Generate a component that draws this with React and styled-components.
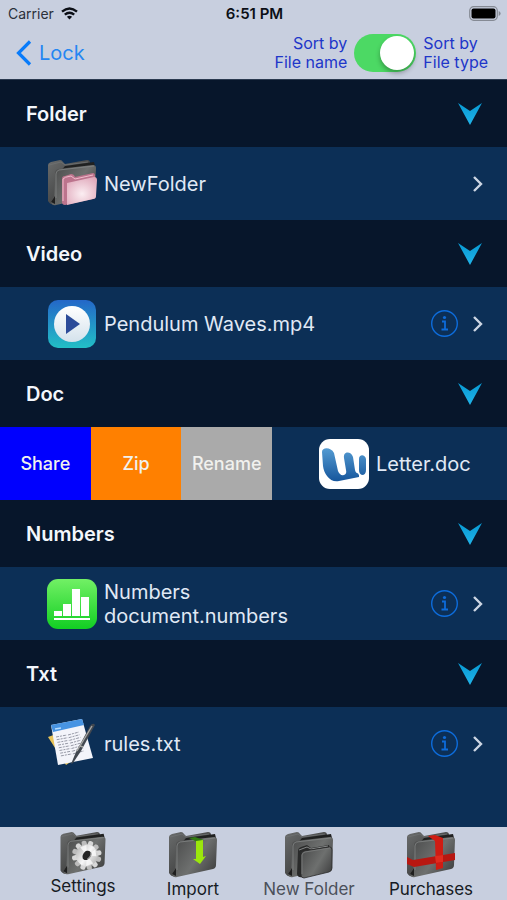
import React, { useState } from "react"
import styled, { createGlobalStyle } from "styled-components"

const sections = [
  { title: "Folder", file: "NewFolder", icon: "folder" },
  { title: "Video", file: "Pendulum Waves.mp4", icon: "video", info: true },
  { title: "Doc", file: "Letter.doc", icon: "doc", swiped: true },
  { title: "Numbers", file: "Numbers document.numbers", icon: "numbers", info: true },
  { title: "Txt", file: "rules.txt", icon: "txt", info: true },
]

const actions = [
  { name: "Share", color: "#0000fe" },
  { name: "Zip", color: "#ff8000" },
  { name: "Rename", color: "#aaaaaa" },
]

const tools = [
  { name: "Settings", icon: "settings", small: true },
  { name: "Import", icon: "import" },
  { name: "New Folder", icon: "stack", dim: true },
  { name: "Purchases", icon: "gift" },
]

const Gradients = () => (
  <defs>
    <linearGradient id="back" x1="0" y1="0" x2="1" y2="1">
      <stop offset="0" stopColor="#6a6c6c" />
      <stop offset="0.5" stopColor="#4a4b4b" />
      <stop offset="1" stopColor="#171717" />
    </linearGradient>
    <linearGradient id="front" x1="0" y1="0.2" x2="1" y2="0.8">
      <stop offset="0" stopColor="#4c4d4d" />
      <stop offset="0.55" stopColor="#6e706f" />
      <stop offset="1" stopColor="#404141" />
    </linearGradient>
    <radialGradient id="pink" cx="0.5" cy="0.6" r="0.7">
      <stop offset="0" stopColor="#fbeef2" />
      <stop offset="1" stopColor="#dfa6b9" />
    </radialGradient>
    <linearGradient id="video" x1="0" y1="0" x2="0" y2="1">
      <stop offset="0" stopColor="#2467c8" />
      <stop offset="1" stopColor="#22bfc6" />
    </linearGradient>
    <linearGradient id="disc" x1="0" y1="0" x2="0" y2="1">
      <stop offset="0" stopColor="#ffffff" />
      <stop offset="1" stopColor="#d4e2ec" />
    </linearGradient>
    <linearGradient id="word" x1="0" y1="0" x2="0" y2="1">
      <stop offset="0" stopColor="#549bd2" />
      <stop offset="1" stopColor="#16569c" />
    </linearGradient>
    <linearGradient id="green" x1="0" y1="0" x2="0" y2="1">
      <stop offset="0" stopColor="#72f065" />
      <stop offset="1" stopColor="#12cf23" />
    </linearGradient>
    <linearGradient id="arrow" x1="0" y1="0" x2="0" y2="1">
      <stop offset="0" stopColor="#079ad5" />
      <stop offset="1" stopColor="#22b4e8" />
    </linearGradient>
    <linearGradient id="gear" x1="0" y1="0" x2="1" y2="1">
      <stop offset="0" stopColor="#a9a9a9" />
      <stop offset="0.5" stopColor="#f7f7f7" />
      <stop offset="1" stopColor="#a5a5a5" />
    </linearGradient>
  </defs>
)

const FolderBack = () => (
  <>
    <path
      d="M1 6Q1 4 4 3L13 1Q15 1 16 3L18 5L40 1Q43 1 43 4L43 11L12 16L9 45Q4 47 1 42Z"
      fill="url(#back)"
    />
    <path d="M2 6L14 3L18 6L41 3" fill="none" stroke="#707273" strokeWidth="0.8" />
    <path d="M18 7L47 3L48 7L12 14Z" fill="#202121" />
  </>
)

const FolderFront = () => (
  <>
    <path
      d="M8 14Q8 11 11 10L46 6Q49 6 49 9L48 34Q48 37 45 38L9 46Q5 47 4 43L7 38Z"
      fill="url(#front)"
    />
    <path
      d="M9 39L9 15Q9 12 12 11L47 7"
      fill="none"
      stroke="#838585"
      strokeWidth="0.8"
    />
    <path d="M4 43L8 37L8 45Z" fill="#1e1e1e" />
  </>
)

const Gear = () => (
  <g transform="translate(29 26) rotate(-12)">
    {Array.from({ length: 12 }, (_, i) => (
      <path
        key={i}
        d="M-3 -10L-2.5 -15Q0 -17 2.5 -15L3 -10Z"
        fill={i % 2 ? "#d8d8d8" : "#bcbcbc"}
        transform={`rotate(${i * 30})`}
      />
    ))}
    <circle r="11.5" fill="url(#gear)" />
    <path d="M0 0L-5 -10L2 -11ZM0 0L10 -4L10 3ZM0 0L5 10L-3 11Z" fill="#fff" opacity="0.7" />
    <ellipse rx="5.5" ry="4" fill="#242424" transform="rotate(-42)" />
    <path d="M0 4Q5 2 5 -2" fill="none" stroke="#999" strokeWidth="1.4" />
  </g>
)

const icons = {
  folder: (
    <>
      <FolderBack />
      <FolderFront />
      <path
        d="M15 20Q15 17 18 17L24 15Q27 15 28 18L46 14Q48 14 48 17L49 36Q49 39 46 40L18 46Q15 46 15 43Z"
        fill="#bc748d"
      />
      <path d="M20 24L47 18Q50 18 50 21L49 37Q49 40 46 40L20 46Z" fill="url(#pink)" />
      <path d="M16 42V20Q17 18 24 17L28 20L46 16" fill="none" stroke="#f0bccb" />
    </>
  ),
  video: (
    <>
      <rect x="1" y="1" width="48" height="48" rx="10" fill="url(#video)" />
      <circle cx="25" cy="25" r="18" fill="url(#disc)" />
      <path d="M19 15L33 25L19 35Z" fill="#2b4b99" />
    </>
  ),
  doc: (
    <>
      <rect width="50" height="50" rx="11" fill="#fff" />
      <path
        d="M3 13C3 8 12 8 15 14L19 32Q21 37 25 36Q28 35 27 31L25 19C24 12 32 12 34 18L36 31Q37 35 40 34L40 38L20 42C11 44 5 35 4 27ZM40 20C40 15 46 15 47 20V31Q47 36 43 36Q40 35 40 31Z"
        fill="url(#word)"
      />
      <path d="M39 34L42 38" stroke="#fff" />
    </>
  ),
  numbers: (
    <>
      <rect width="50" height="50" rx="11" fill="url(#green)" />
      <path
        d="M7 32H15V37H7ZM16 25H24V37H16ZM25 10H33V37H25ZM34 18H42V37H34ZM7 39H43V41H7Z"
        fill="#fff"
      />
    </>
  ),
  txt: (
    <>
      <path d="M1 18L12 14L25 42L19 46Z" fill="#e8c459" />
      <path d="M4 6L35 0L46 39L11 46Z" fill="#f3f4fa" />
      <path d="M4 6L35 0L37 6L6 13Z" fill="#4794e3" />
      <path d="M8 10L14 9" stroke="#b6ddff" strokeWidth="1.5" />
      {[0, 1, 2, 3, 4, 5, 6, 7].map((n) => (
        <path
          key={n}
          d={`M${9 + n * 0.7} ${18 + n * 2.7}l11 -2m1 0l11 -3`}
          stroke="#8b8f9c"
          strokeWidth="0.9"
          strokeDasharray="3 1 2 1"
        />
      ))}
      <path d="M24 45L29 33L43 7Q46 3 48 6L34 32L26 44Z" fill="#424850" />
      <path d="M30 32L45 7M33 27L36 28" stroke="#a7a7a4" strokeWidth="1.4" />
    </>
  ),
  settings: (
    <>
      <FolderBack />
      <FolderFront />
      <Gear />
    </>
  ),
  import: (
    <>
      <FolderBack />
      <FolderFront />
      <path d="M21 7L27 6L36 9L29 11Z" fill="#327b13" />
      <path d="M28 10L35 9V26L38 25L32 33L25 28L28 28Z" fill="#9be70c" />
    </>
  ),
  stack: (
    <>
      <FolderBack />
      <FolderFront />
      <path
        d="M14 20Q14 17 17 16L23 14L27 17L45 14L46 18L18 22L18 46Q14 47 13 43Z"
        fill="#292a2a"
      />
      <path d="M15 19L23 16L27 18L44 15" fill="none" stroke="#858787" />
      <path
        d="M17 24Q17 21 20 20L46 16Q48 16 48 19L48 37Q48 40 45 41L20 47Q17 47 17 44Z"
        fill="url(#front)"
        stroke="#292a2a"
        strokeWidth="0.8"
      />
      <path d="M18 43V24Q18 22 21 21L46 17" fill="none" stroke="#777979" />
    </>
  ),
  gift: (
    <>
      <FolderBack />
      <FolderFront />
      <path d="M22 5L29 4L37 7L37 37L30 39L29 10Z" fill="#cf1c13" />
      <path d="M1 26L7 29L49 22V29L8 36L1 33Z" fill="#b81711" />
      <path d="M29 25L37 24V31L30 32Z" fill="#e12b1e" />
    </>
  ),
}

const Section = ({ title, file, icon, info, swiped }) => {
  const [open, setOpen] = useState(true)

  return (
    <section>
      <SectionTitle>
        <SectionButton aria-expanded={open} onClick={() => setOpen(!open)}>
          {title}
          <svg width="26" height="24" viewBox="0 0 26 24" aria-hidden="true">
            <path d="M1 1L13 9L25 1L13 23Z" fill="url(#arrow)" />
          </svg>
        </SectionButton>
      </SectionTitle>
      {open && (
        <Row>
          {swiped && (
            <Actions>
              {actions.map((a) => (
                <Action key={a.name} $color={a.color}>
                  {a.name}
                </Action>
              ))}
            </Actions>
          )}
          <File href="#">
            <FileIcon viewBox="0 0 50 50" aria-hidden="true">
              {icons[icon]}
            </FileIcon>
            <FileName>{file}</FileName>
          </File>
          {info && (
            <Info aria-label={`About ${file}`}>
              <svg width="27" height="27" viewBox="0 0 27 27" fill="none" stroke="#0d6cdb">
                <circle cx="13.5" cy="13.5" r="12.8" strokeWidth="1.4" />
                <path d="M11 11.5H14V19M10.5 19.5H17" strokeWidth="1.8" />
                <circle cx="13.5" cy="7.5" r="1.6" fill="#0d6cdb" stroke="none" />
              </svg>
            </Info>
          )}
          {!swiped && (
            <Chevron width="11" height="18" viewBox="0 0 11 18" aria-hidden="true">
              <path d="M2 2L9 9L2 16" fill="none" stroke="#cdd6e3" strokeWidth="2.4" />
            </Chevron>
          )}
        </Row>
      )}
    </section>
  )
}

const App = () => {
  const [byType, setByType] = useState(true)

  return (
    <Page>
      <GlobalStyle />
      <Defs aria-hidden="true">
        <Gradients />
      </Defs>
      <Header>
        <StatusBar>
          <Carrier>
            Carrier
            <svg width="17" height="13" viewBox="0 0 17 13" aria-hidden="true">
              <g fill="none" stroke="#0c0f16" strokeWidth="2.4">
                <path d="M1 4.6Q8.5 -1.8 16 4.6" />
                <path d="M3.8 7.7Q8.5 3.7 13.2 7.7" />
              </g>
              <path d="M5.9 9.8Q8.5 7.7 11.1 9.8L8.5 12.6Z" fill="#0c0f16" />
            </svg>
          </Carrier>
          <Time>6:51 PM</Time>
          <Battery width="32" height="15" viewBox="0 0 32 15" aria-label="Battery full">
            <rect x="0.7" y="0.7" width="27.6" height="13.6" rx="4" fill="none" stroke="#858a94" strokeWidth="1.2" />
            <rect x="2.5" y="2.5" width="24" height="10" rx="2" fill="#000" />
            <path d="M29.7 5Q31.6 5.8 31.6 7.5T29.7 10Z" fill="#858a94" />
          </Battery>
        </StatusBar>
        <NavBar>
          <Back>
            <svg width="16" height="26" viewBox="0 0 16 26" aria-hidden="true">
              <path d="M14 1.5L2.5 13L14 24.5" fill="none" stroke="#087bfa" strokeWidth="3.2" />
            </svg>
            Lock
          </Back>
          <Sort>
            <SortLabel htmlFor="sort" $right>
              Sort by
              <br />
              File name
            </SortLabel>
            <Switch
              id="sort"
              type="checkbox"
              role="switch"
              checked={byType}
              onChange={() => setByType(!byType)}
            />
            <SortLabel htmlFor="sort">
              Sort by
              <br />
              File type
            </SortLabel>
          </Sort>
        </NavBar>
      </Header>
      <List>
        {sections.map((s) => (
          <Section key={s.title} {...s} />
        ))}
      </List>
      <Toolbar>
        {tools.map((t) => (
          <Tool key={t.name} $dim={t.dim}>
            <ToolIcon viewBox="0 0 50 48" $small={t.small} aria-hidden="true">
              {icons[t.icon]}
            </ToolIcon>
            {t.name}
          </Tool>
        ))}
      </Toolbar>
    </Page>
  )
}

const GlobalStyle = createGlobalStyle`
  * {
    box-sizing: border-box;
  }

  body {
    margin: 0;
    background: #0c2f56;
    font-family: Inter, "Liberation Sans", sans-serif;
  }

  button {
    padding: 0;
    border: 0;
    background: none;
    font-family: inherit;
    cursor: pointer;
  }

  svg {
    display: block;
    flex: none;
  }
`

const Page = styled.div`
  min-height: 100vh;
  display: flex;
  flex-direction: column;
`

const Defs = styled.svg`
  position: absolute;
  width: 0;
  height: 0;
`

const Header = styled.header`
  height: 80px;
  background: #c8cfdf;
  border-bottom: 1px solid #2b3a50;
`

const StatusBar = styled.div`
  height: 27px;
  padding: 0 6px 0 8px;
  display: grid;
  grid-template-columns: 1fr auto 1fr;
  align-items: center;
  color: #0c0f16;
`

const Carrier = styled.span`
  display: flex;
  align-items: center;
  gap: 7px;
  font-size: 14px;
  color: #2b303a;
`

const Time = styled.span`
  font-size: 15px;
  font-weight: 600;
`

const Battery = styled.svg`
  justify-self: end;
`

const NavBar = styled.nav`
  height: 52px;
  padding: 0 19px 0 16px;
  display: flex;
  align-items: center;
  justify-content: space-between;
`

const Back = styled.button`
  display: flex;
  align-items: center;
  gap: 7px;
  font-size: 20px;
  color: #2586f2;
`

const Sort = styled.div`
  display: flex;
  align-items: center;
  gap: 7px;
`

const SortLabel = styled.label`
  font-size: 16px;
  line-height: 19px;
  color: #2036c9;
  text-align: ${(p) => (p.$right ? "right" : "left")};
`

const Switch = styled.input`
  appearance: none;
  width: 62px;
  height: 38px;
  margin: 0;
  padding: 2px;
  display: flex;
  justify-content: flex-end;
  border-radius: 19px;
  background: #4cd964;
  cursor: pointer;

  &:not(:checked) {
    justify-content: flex-start;
    background: #a8b0be;
  }

  &::before {
    content: "";
    width: 34px;
    height: 34px;
    border-radius: 50%;
    background: white;
    box-shadow: 0 3px 5px rgba(0, 0, 0, 0.3);
  }
`

const List = styled.main`
  flex: 1;
`

const SectionTitle = styled.h2`
  margin: 0;
`

const SectionButton = styled.button`
  width: 100%;
  height: 67px;
  padding: 0 24px 0 26px;
  display: flex;
  align-items: center;
  justify-content: space-between;
  background: #07162b;
  color: #f3f7fc;
  font-size: 20px;
  font-weight: 600;
`

const Row = styled.div`
  min-height: 73px;
  display: flex;
  align-items: center;
`

const Actions = styled.div`
  width: 272px;
  display: flex;
  align-self: stretch;
`

const Action = styled.button`
  flex: 1;
  background: ${(p) => p.$color};
  color: #f1f1ee;
  font-size: 18px;
  font-weight: 500;
`

const File = styled.a`
  flex: 1;
  padding-left: 47px;
  display: flex;
  align-items: center;
  gap: 7px;
  color: #e0e9f5;
  text-decoration: none;
`

const FileIcon = styled.svg`
  width: 50px;
  height: 50px;
`

const FileName = styled.span`
  max-width: 240px;
  font-size: 20px;
  line-height: 24px;
`

const Info = styled.button`
  margin-right: 14px;
`

const Chevron = styled.svg`
  margin-right: 24px;
`

const Toolbar = styled.footer`
  height: 73px;
  padding: 4px 16px 0 29px;
  display: grid;
  grid-template-columns: 9fr 9fr 10fr 10fr;
  column-gap: 2px;
  background: #c8cfdf;
`

const Tool = styled.button`
  display: flex;
  flex-direction: column;
  align-items: center;
  color: ${(p) => (p.$dim ? "#4b505a" : "#171b24")};
  font-size: 17px;
  line-height: 20px;
  white-space: nowrap;
`

const ToolIcon = styled.svg`
  width: 50px;
  height: ${(p) => (p.$small ? "45px" : "48px")};
`

export default App
